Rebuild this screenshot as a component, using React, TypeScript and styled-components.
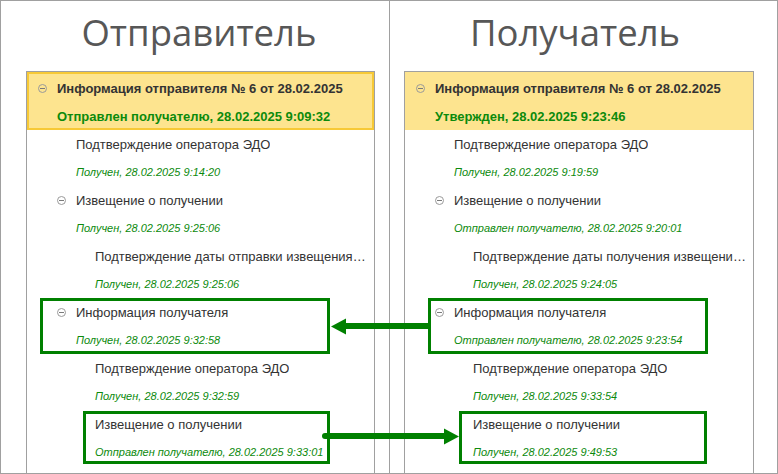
import React from 'react';
import styled, { createGlobalStyle } from 'styled-components';

const gridGrey = '#a0a0a0';
const textDark = '#333333';
const statusGreen = '#0c8a0c';
const markGreen = '#008000';
const headerYellow = '#fde48f';
const selectedYellow = '#f7c936';

const GlobalStyle = createGlobalStyle`
  html, body {
    margin: 0;
    padding: 0;
    background: #ffffff;
  }
  body {
    font-family: 'Liberation Sans', Arial, sans-serif;
  }
`;

const Page = styled.div`
  position: relative;
  width: 778px;
  height: 474px;
  box-sizing: border-box;
  border: 1px solid ${gridGrey};
  display: grid;
  grid-template-columns: 388px 1fr;
  overflow: hidden;
`;

const Column = styled.section<{ $side: 'left' | 'right' }>`
  display: flex;
  flex-direction: column;
  min-width: 0;
  padding: ${(p) => (p.$side === 'left' ? '0 14px 0 25px' : '0 23px 0 14px')};
  border-left: ${(p) => (p.$side === 'right' ? `1px solid ${gridGrey}` : 'none')};
`;

const Title = styled.h1<{ $shift: number }>`
  height: 70px;
  margin: 0;
  padding: 7px ${(p) => p.$shift}px 0 0;
  box-sizing: border-box;
  font-family: 'Open Sans', 'Liberation Sans', sans-serif;
  font-weight: 400;
  font-size: 36.5px;
  line-height: 48px;
  color: #575757;
  text-align: center;
  white-space: nowrap;
`;

const TreeBox = styled.div`
  flex: 1;
  border: 1px solid ${gridGrey};
  border-bottom: none;
  overflow: hidden;
`;

const Header = styled.div<{ $selected: boolean }>`
  height: 58px;
  box-sizing: border-box;
  padding-top: 2px;
  background: ${headerYellow};
  box-shadow: inset 0 0 0 2px ${(p) => (p.$selected ? selectedYellow : headerYellow)};
`;

const Row = styled.div<{ $level: number }>`
  height: 56px;
  padding: 0 6px 0 ${(p) => 11 + p.$level * 19}px;
  min-width: 0;
`;

const Line = styled.div`
  display: flex;
  align-items: center;
  height: 28px;
  min-width: 0;
`;

const Toggle = styled.span<{ $hidden?: boolean }>`
  position: relative;
  flex-shrink: 0;
  width: 9px;
  height: 9px;
  box-sizing: border-box;
  margin-right: 10px;
  border: 1px solid #9a9a9a;
  border-radius: 50%;
  visibility: ${(p) => (p.$hidden ? 'hidden' : 'visible')};

  &::after {
    content: '';
    position: absolute;
    left: 1px;
    right: 1px;
    top: 3px;
    height: 1px;
    background: #7a7a7a;
  }
`;

const Name = styled.span<{ $bold?: boolean }>`
  font-size: 13px;
  font-weight: ${(p) => (p.$bold ? 700 : 400)};
  color: ${textDark};
  white-space: nowrap;
  overflow: hidden;
  text-overflow: ellipsis;
`;

const Status = styled.div<{ $bold?: boolean }>`
  display: flex;
  align-items: center;
  height: 28px;
  padding-left: 19px;
  font-size: ${(p) => (p.$bold ? '13px' : '11px')};
  font-weight: ${(p) => (p.$bold ? 700 : 400)};
  font-style: ${(p) => (p.$bold ? 'normal' : 'italic')};
  color: ${statusGreen};
  white-space: nowrap;
  overflow: hidden;
`;

const Overlay = styled.svg`
  position: absolute;
  top: -1px;
  left: -1px;
  pointer-events: none;
`;

interface Node {
  title: string;
  status: string;
  level: number;
  expandable?: boolean;
}

interface PanelData {
  side: 'left' | 'right';
  caption: string;
  captionShift: number;
  header: string;
  headerStatus: string;
  selected: boolean;
  nodes: Node[];
}

const panels: PanelData[] = [
  {
    side: 'left',
    caption: 'Отправитель',
    captionShift: 3,
    header: 'Информация отправителя № 6 от 28.02.2025',
    headerStatus: 'Отправлен получателю, 28.02.2025 9:09:32',
    selected: true,
    nodes: [
      { title: 'Подтверждение оператора ЭДО', status: 'Получен, 28.02.2025 9:14:20', level: 1 },
      { title: 'Извещение о получении', status: 'Получен, 28.02.2025 9:25:06', level: 1, expandable: true },
      { title: 'Подтверждение даты отправки извещения о получении', status: 'Получен, 28.02.2025 9:25:06', level: 2 },
      { title: 'Информация получателя', status: 'Получен, 28.02.2025 9:32:58', level: 1, expandable: true },
      { title: 'Подтверждение оператора ЭДО', status: 'Получен, 28.02.2025 9:32:59', level: 2 },
      { title: 'Извещение о получении', status: 'Отправлен получателю, 28.02.2025 9:33:01', level: 2 },
    ],
  },
  {
    side: 'right',
    caption: 'Получатель',
    captionShift: 8,
    header: 'Информация отправителя № 6 от 28.02.2025',
    headerStatus: 'Утвержден, 28.02.2025 9:23:46',
    selected: false,
    nodes: [
      { title: 'Подтверждение оператора ЭДО', status: 'Получен, 28.02.2025 9:19:59', level: 1 },
      { title: 'Извещение о получении', status: 'Отправлен получателю, 28.02.2025 9:20:01', level: 1, expandable: true },
      { title: 'Подтверждение даты получения извещения о получении', status: 'Получен, 28.02.2025 9:24:05', level: 2 },
      { title: 'Информация получателя', status: 'Отправлен получателю, 28.02.2025 9:23:54', level: 1, expandable: true },
      { title: 'Подтверждение оператора ЭДО', status: 'Получен, 28.02.2025 9:33:54', level: 2 },
      { title: 'Извещение о получении', status: 'Получен, 28.02.2025 9:49:53', level: 2 },
    ],
  },
];

// annotation frames drawn over the trees, in page pixels
const frames = [
  { x: 41.5, y: 299.5, w: 287, h: 53 },
  { x: 84.5, y: 412.5, w: 244, h: 50 },
  { x: 429.5, y: 299.5, w: 277, h: 53 },
  { x: 460.5, y: 412.5, w: 245, h: 50 },
];

const TreeNode = ({ node }: { node: Node }) => (
  <Row $level={node.level}>
    <Line>
      <Toggle $hidden={!node.expandable} />
      <Name>{node.title}</Name>
    </Line>
    <Status>{node.status}</Status>
  </Row>
);

const Panel = ({ data }: { data: PanelData }) => (
  <Column $side={data.side}>
    <Title $shift={data.captionShift}>{data.caption}</Title>
    <TreeBox>
      <Header $selected={data.selected}>
        <Row $level={0}>
          <Line>
            <Toggle />
            <Name $bold>{data.header}</Name>
          </Line>
          <Status $bold>{data.headerStatus}</Status>
        </Row>
      </Header>
      {data.nodes.map((node, i) => (
        <TreeNode key={i} node={node} />
      ))}
    </TreeBox>
  </Column>
);

const App = () => (
  <>
    <GlobalStyle />
    <Page>
      {panels.map((p) => (
        <Panel key={p.side} data={p} />
      ))}
      <Overlay width={778} height={474} viewBox="0 0 778 474">
        {frames.map((f, i) => (
          <rect
            key={i}
            x={f.x}
            y={f.y}
            width={f.w}
            height={f.h}
            fill="none"
            stroke={markGreen}
            strokeWidth={3}
          />
        ))}
        <line x1={428} y1={326} x2={344} y2={326} stroke={markGreen} strokeWidth={6} />
        <polygon points="331,326.5 346,318.5 346,334.5" fill={markGreen} />
        <line x1={325} y1={436} x2={446} y2={436} stroke={markGreen} strokeWidth={6} strokeLinecap="round" />
        <polygon points="459,436.5 444,428.5 444,444.5" fill={markGreen} />
      </Overlay>
    </Page>
  </>
);

export default App;
